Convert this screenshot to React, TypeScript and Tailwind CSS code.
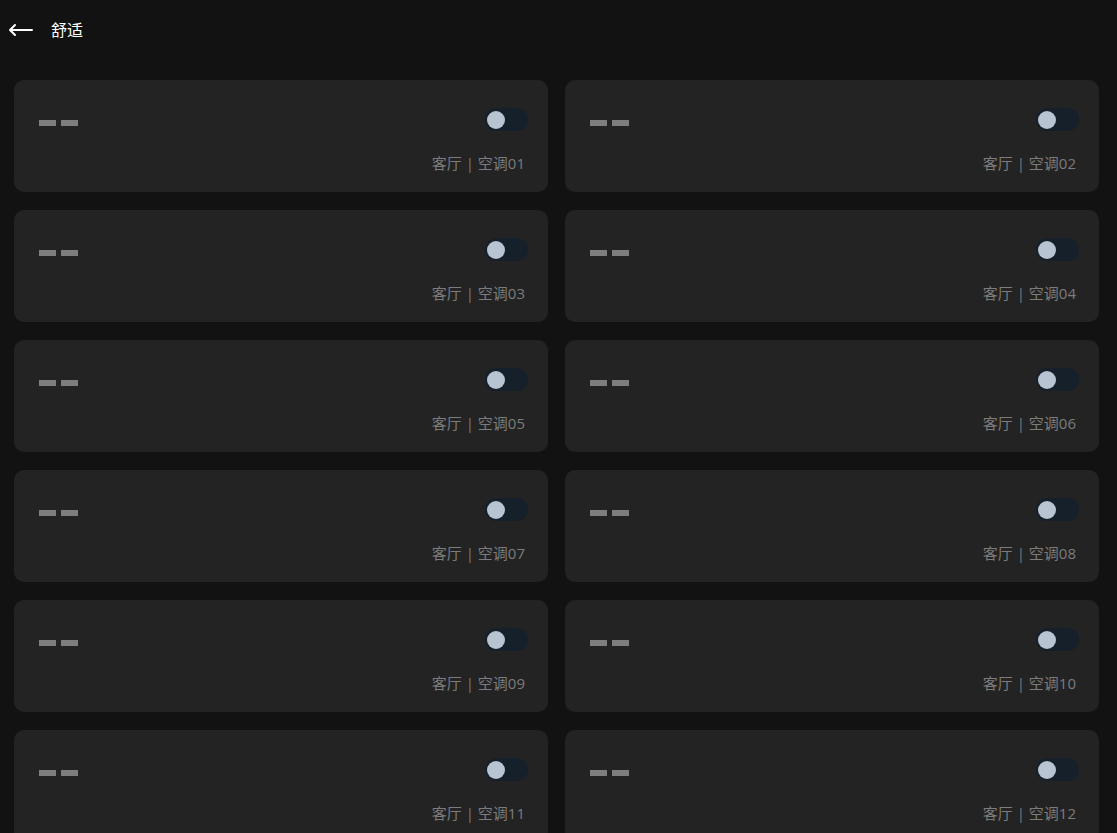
const devices = Array.from({ length: 12 }, (_, i) => ({
  id: i + 1,
  room: "客厅",
  name: `空调${String(i + 1).padStart(2, "0")}`,
}));

const DeviceCard = ({ room, name }: { room: string; name: string }) => {
  return (
    <div className="h-[112px] rounded-[10px] bg-[#232323] pl-[25px] pr-[23px] pt-[28px]">
      <div className="flex items-center justify-between">
        <div className="mt-[6px] flex gap-[5px]">
          <span className="h-[6px] w-[17px] bg-[#7e7e7e]" />
          <span className="h-[6px] w-[17px] bg-[#7e7e7e]" />
        </div>
        <div className="mr-[-3px] flex h-[23px] w-[43px] items-center rounded-full bg-[#15202b] pl-[2px]">
          <span className="h-[18px] w-[18px] rounded-full bg-[#b8c4d1]" />
        </div>
      </div>
      <p className="mt-[22px] text-right text-[15px] leading-[20px] text-[#7c7c7c]">
        {room} | {name}
      </p>
    </div>
  );
};

const App = () => {
  return (
    <div
      className="min-h-screen bg-[#121212] text-white"
      style={{ fontFamily: '"Open Sans", "Noto Sans CJK SC", sans-serif' }}
    >
      <header className="flex h-[60px] items-center pl-[8px]">
        <svg width="25" height="14" viewBox="0 0 25 14" fill="none" stroke="white" strokeWidth="2" strokeLinecap="round" strokeLinejoin="round">
          <path d="M24 7H2M7 2L2 7l5 5" />
        </svg>
        <h1 className="ml-[18px] text-[16px] text-white">舒适</h1>
      </header>
      <div className="grid grid-cols-2 gap-x-[17px] gap-y-[18px] pl-[14px] pr-[18px] pt-[20px] pb-[20px]">
        {devices.map((d) => (
          <DeviceCard key={d.id} room={d.room} name={d.name} />
        ))}
      </div>
    </div>
  );
};

export default App;
